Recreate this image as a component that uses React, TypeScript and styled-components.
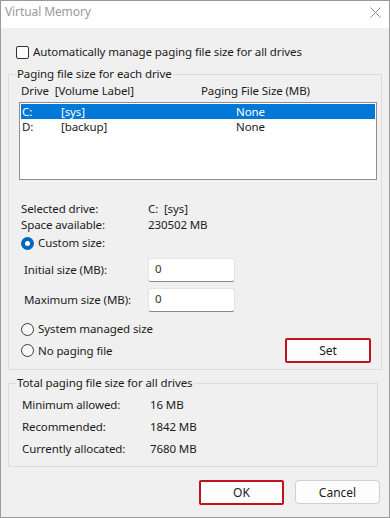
import React from "react";
import styled, { createGlobalStyle } from "styled-components";

const GlobalStyle = createGlobalStyle`
  html, body {
    margin: 0;
    padding: 0;
    background: #ffffff;
  }
  body {
    font-family: "Noto Sans", "Open Sans", sans-serif;
    font-size: 11.5px;
    line-height: 16px;
    letter-spacing: -0.1px;
    color: #1b1b1b;
  }
`;

const Window = styled.div`
  width: 390px;
  height: 518px;
  box-sizing: border-box;
  border: 1px solid #9a9a9a;
  background: #f0f0f0;
  display: flex;
  flex-direction: column;
`;

const TitleBar = styled.div`
  height: 27px;
  background: #ffffff;
  display: flex;
  align-items: center;
  justify-content: space-between;
  padding: 0 8px 5px 4px;
  box-sizing: border-box;
`;

const Title = styled.span`
  color: #9a9a9a;
  font-size: 12px;
`;

const Body = styled.div`
  flex: 1;
  padding: 0 8px 0 7px;
  display: flex;
  flex-direction: column;
`;

const CheckRow = styled.label`
  display: flex;
  align-items: center;
  gap: 4px;
  height: 16px;
  margin-top: 16px;
  padding-left: 8px;
`;

const CheckBox = styled.span`
  width: 11px;
  height: 11px;
  border: 1px solid #333333;
  border-radius: 2px;
  background: #fbfbfb;
`;

const Group = styled.fieldset<{ $width: number; $top: number; $bottom: number }>`
  margin: ${(p) => p.$top}px 0 0 0;
  width: ${(p) => p.$width}px;
  box-sizing: border-box;
  border: 1px solid #dcdcdc;
  border-radius: 0;
  padding: 0 0 ${(p) => p.$bottom}px 8px;
  display: flex;
  flex-direction: column;
`;

const Legend = styled.legend`
  padding: 0 1px;
  margin-left: -1px;
  line-height: 16px;
`;

const ColumnHeader = styled.div`
  display: flex;
  height: 16px;
  align-items: center;
  margin-top: 1px;
  padding-left: 4px;
`;

const HeadCell = styled.span<{ $w: number }>`
  width: ${(p) => p.$w}px;
  white-space: pre;
`;

const ListBox = styled.div`
  margin: 3px 0 0 2px;
  width: 358px;
  height: 78px;
  flex-shrink: 0;
  box-sizing: border-box;
  background: #ffffff;
  border: 1px solid #8c8f94;
  padding: 1px;
`;

const ListRow = styled.div<{ $selected?: boolean }>`
  display: flex;
  height: 15px;
  line-height: 15px;
  align-items: center;
  padding-left: 1px;
  background: ${(p) => (p.$selected ? "#0078d7" : "transparent")};
  color: ${(p) => (p.$selected ? "#ffffff" : "#1b1b1b")};
`;

const Cell = styled.span<{ $w: number }>`
  width: ${(p) => p.$w}px;
`;

const InfoGrid = styled.div<{ $top: number; $line: number; $value: number; $left: number }>`
  display: grid;
  grid-template-columns: ${(p) => p.$value}px 1fr;
  line-height: ${(p) => p.$line}px;
  margin-top: ${(p) => p.$top}px;
  padding-left: ${(p) => p.$left}px;
`;

const RadioRow = styled.div<{ $top: number }>`
  display: flex;
  align-items: center;
  gap: 4px;
  height: 16px;
  margin-top: ${(p) => p.$top}px;
  padding-left: 4px;
`;

const Radio = styled.span<{ $checked?: boolean }>`
  width: 13px;
  height: 13px;
  box-sizing: border-box;
  border-radius: 50%;
  border: ${(p) => (p.$checked ? "4px solid #0067c0" : "1px solid #3c3c3c")};
  background: ${(p) => (p.$checked ? "#ffffff" : "#f7f7f7")};
`;

const FieldRow = styled.div<{ $top: number }>`
  display: flex;
  align-items: center;
  margin-top: ${(p) => p.$top}px;
  padding-left: 7px;
`;

const FieldLabel = styled.span`
  width: 124px;
`;

const TextBox = styled.div`
  width: 87px;
  height: 24px;
  box-sizing: border-box;
  background: #ffffff;
  border: 1px solid #e3e3e3;
  border-bottom: 1px solid #8a8a8a;
  border-radius: 3px;
  padding: 1px 6px;
  line-height: 18px;
  color: #333333;
`;

const SplitRow = styled.div`
  display: flex;
  align-items: center;
  justify-content: space-between;
  margin-top: 1px;
  padding-right: 10px;
`;

const Button = styled.button<{ $marked?: boolean; $w: number }>`
  width: ${(p) => p.$w}px;
  height: ${(p) => (p.$marked ? 25 : 24)}px;
  box-sizing: border-box;
  font-family: inherit;
  font-size: 12px;
  color: #1b1b1b;
  background: #fdfdfd;
  border: ${(p) => (p.$marked ? "2px solid #c1121f" : "1px solid #d0d0d0")};
  border-radius: ${(p) => (p.$marked ? "2px" : "4px")};
  padding: 0;
`;

const ButtonBar = styled.div`
  display: flex;
  justify-content: flex-end;
  gap: 11px;
  margin-top: 13px;
  padding-right: 1px;
`;

const CloseIcon = () => (
  <svg width="11" height="11" viewBox="0 0 11 11">
    <path d="M0.5 0.5 L10.5 10.5 M10.5 0.5 L0.5 10.5" stroke="#8c8c8c" strokeWidth="1" />
  </svg>
);

const App = () => {
  return (
    <>
      <GlobalStyle />
      <Window>
        <TitleBar>
          <Title>Virtual Memory</Title>
          <CloseIcon />
        </TitleBar>
        <Body>
          <CheckRow>
            <CheckBox />
            Automatically manage paging file size for all drives
          </CheckRow>

          <Group $width={374} $top={6} $bottom={6}>
            <Legend>Paging file size for each drive</Legend>
            <ColumnHeader>
              <HeadCell $w={180}>Drive  [Volume Label]</HeadCell>
              <HeadCell $w={150}>Paging File Size (MB)</HeadCell>
            </ColumnHeader>
            <ListBox>
              <ListRow $selected>
                <Cell $w={39}>C:</Cell>
                <Cell $w={175}>[sys]</Cell>
                <Cell $w={80}>None</Cell>
              </ListRow>
              <ListRow>
                <Cell $w={39}>D:</Cell>
                <Cell $w={175}>[backup]</Cell>
                <Cell $w={80}>None</Cell>
              </ListRow>
            </ListBox>

            <InfoGrid $top={21} $line={16} $value={127} $left={4}>
              <span>Selected drive:</span>
              <span>C:&nbsp;&nbsp;[sys]</span>
              <span>Space available:</span>
              <span>230502 MB</span>
            </InfoGrid>

            <RadioRow $top={2}>
              <Radio $checked />
              Custom size:
            </RadioRow>
            <FieldRow $top={7}>
              <FieldLabel>Initial size (MB):</FieldLabel>
              <TextBox>0</TextBox>
            </FieldRow>
            <FieldRow $top={6}>
              <FieldLabel>Maximum size (MB):</FieldLabel>
              <TextBox>0</TextBox>
            </FieldRow>
            <RadioRow $top={9}>
              <Radio />
              System managed size
            </RadioRow>
            <SplitRow>
              <RadioRow $top={0}>
                <Radio />
                No paging file
              </RadioRow>
              <Button $marked $w={86}>
                Set
              </Button>
            </SplitRow>
          </Group>

          <Group $width={370} $top={5} $bottom={6}>
            <Legend>Total paging file size for all drives</Legend>
            <InfoGrid $top={3} $line={22} $value={128} $left={5}>
              <span>Minimum allowed:</span>
              <span>16 MB</span>
              <span>Recommended:</span>
              <span>1842 MB</span>
              <span>Currently allocated:</span>
              <span>7680 MB</span>
            </InfoGrid>
          </Group>

          <ButtonBar>
            <Button $marked $w={85}>
              OK
            </Button>
            <Button $w={85}>Cancel</Button>
          </ButtonBar>
        </Body>
      </Window>
    </>
  );
};

export default App;
